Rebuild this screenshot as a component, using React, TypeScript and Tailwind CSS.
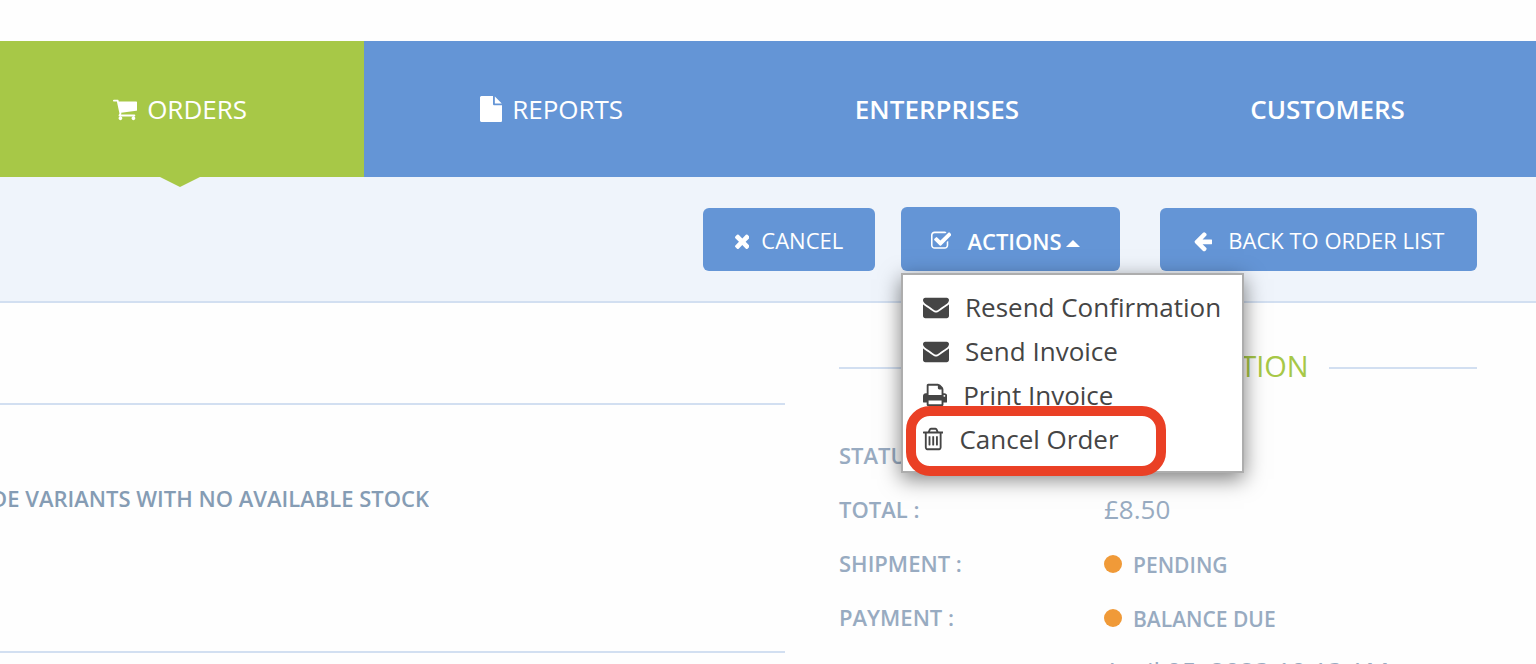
import type { ReactNode } from "react";

const paths = {
  cart: "M704 1536q0 52-38 90t-90 38-90-38-38-90 38-90 90-38 90 38 38 90zm896 0q0 52-38 90t-90 38-90-38-38-90 38-90 90-38 90 38 38 90zm128-1088v512q0 24-16.5 42.5t-40.5 21.5l-1044 122q13 60 13 70 0 16-24 64h920q26 0 45 19t19 45-19 45-45 19h-1024q-26 0-45-19t-19-45q0-11 8-31.5t16-36 21.5-40 15.5-29.5l-177-823h-204q-26 0-45-19t-19-45 19-45 45-19h256q16 0 28.5 6.5t19.5 15.5 13 24.5 8 26 5.5 29.5 4.5 26h1201q26 0 45 19t19 45z",
  file: "M1152 512v-472q22 14 36 28l408 408q14 14 28 36h-472zm-128 32q0 40 28 68t68 28h544v1056q0 40-28 68t-68 28h-1344q-40 0-68-28t-28-68v-1600q0-40 28-68t68-28h800v544z",
  times: "M1490 1322q0 40-28 68l-136 136q-28 28-68 28t-68-28l-294-294-294 294q-28 28-68 28t-68-28l-136-136q-28-28-28-68t28-68l294-294-294-294q-28-28-28-68t28-68l136-136q28-28 68-28t68 28l294 294 294-294q28-28 68-28t68 28l136 136q28 28 28 68t-28 68l-294 294 294 294q28 28 28 68z",
  check: "M1472 930v318q0 119-84.5 203.5t-203.5 84.5h-832q-119 0-203.5-84.5t-84.5-203.5v-832q0-119 84.5-203.5t203.5-84.5h832q63 0 117 25 15 7 18 23 3 17-9 29l-49 49q-10 10-23 10-3 0-9-2-23-6-45-6h-832q-66 0-113 47t-47 113v832q0 66 47 113t113 47h832q66 0 113-47t47-113v-254q0-13 9-22l64-64q10-10 23-10 6 0 12 3 20 8 20 29zm231-489l-814 814q-24 24-57 24t-57-24l-430-430q-24-24-24-57t24-57l110-110q24-24 57-24t57 24l263 263 647-647q24-24 57-24t57 24l110 110q24 24 24 57t-24 57z",
  arrow: "M1664 896v128q0 53-32.5 90.5t-84.5 37.5h-704l293 294q38 36 38 90t-38 90l-75 76q-37 37-90 37-52 0-91-37l-651-652q-37-37-37-90 0-52 37-91l651-650q38-38 91-38 52 0 90 38l75 74q38 38 38 91t-38 91l-293 293h704q52 0 84.5 37.5t32.5 90.5z",
  envelope: "M1792 710v794q0 66-47 113t-113 47h-1472q-66 0-113-47t-47-113v-794q44 49 101 87 362 246 497 345 57 42 92.5 65.5t94.5 48 110 24.5h2q51 0 110-24.5t94.5-48 92.5-65.5q170-123 498-345 57-39 100-87zm0-294q0 79-49 151t-122 123q-376 261-468 325-10 7-42.5 31t-54 38.5-52 32.5-57.5 27-50 9h-2q-23 0-50-9t-57.5-27-52-32.5-54-38.5-42.5-31q-91-64-262-182.5t-205-142.5q-62-42-117-115.5t-55-136.5q0-78 41.5-130t118.5-52h1472q65 0 112.5 47t47.5 113z",
  print: "M448 1536h896v-256h-896v256zm0-640h896v-384h-160q-40 0-68-28t-28-68v-160h-640v640zm1152 64q0-26-19-45t-45-19-45 19-19 45 19 45 45 19 45-19 19-45zm128 0v416q0 13-9.5 22.5t-22.5 9.5h-224v160q0 40-28 68t-68 28h-960q-40 0-68-28t-28-68v-160h-224q-13 0-22.5-9.5t-9.5-22.5v-416q0-79 56.5-135.5t135.5-56.5h64v-544q0-40 28-68t68-28h672q40 0 88 20t76 48l152 152q28 28 48 76t20 88v256h64q79 0 135.5 56.5t56.5 135.5z",
  trash: "M704 736v576q0 14-9 23t-23 9h-64q-14 0-23-9t-9-23v-576q0-14 9-23t23-9h64q14 0 23 9t9 23zm256 0v576q0 14-9 23t-23 9h-64q-14 0-23-9t-9-23v-576q0-14 9-23t23-9h64q14 0 23 9t9 23zm256 0v576q0 14-9 23t-23 9h-64q-14 0-23-9t-9-23v-576q0-14 9-23t23-9h64q14 0 23 9t9 23zm128 724v-948h-896v948q0 22 7 40.5t14.5 27 10.5 8.5h832q3 0 10.5-8.5t14.5-27 7-40.5zm-672-1076h448l-48-117q-7-9-17-11h-317q-10 2-17 11zm928 32v64q0 14-9 23t-23 9h-96v948q0 83-47 143.5t-113 60.5h-832q-66 0-113-58.5t-47-141.5v-952h-96q-14 0-23-9t-9-23v-64q0-14 9-23t23-9h309l70-167q15-37 54-63t79-26h320q40 0 79 26t54 63l70 167h309q14 0 23 9t9 23z",
};

type IconName = keyof typeof paths;

// Horizontal extent of each glyph in its 1792-unit em: [left, width].
const extents: Record<IconName, [number, number]> = {
  cart: [64, 1664],
  file: [128, 1536],
  times: [302, 1188],
  check: [64, 1664],
  arrow: [64, 1600],
  envelope: [0, 1792],
  print: [64, 1664],
  trash: [192, 1408],
};

function Icon({ name, className }: { name: IconName; className: string }) {
  const [left, width] = extents[name];
  return (
    <svg viewBox={`${left} 0 ${width} 1792`} fill="currentColor" aria-hidden="true" className={`shrink-0 ${className}`}>
      <path d={paths[name]} />
    </svg>
  );
}

function NavLink({ icon, children, active = false }: { icon?: IconName; children: ReactNode; active?: boolean }) {
  return (
    <a
      href="#"
      className={
        active
          ? "relative flex items-center justify-center gap-2.5 bg-[#a7c847] pr-1 font-medium"
          : icon
            ? "flex items-center justify-center gap-2.5 font-medium"
            : "flex items-center justify-center font-semibold"
      }
    >
      {icon && <Icon name={icon} className="h-[26px]" />}
      {children}
      {active && (
        <svg viewBox="0 0 40 10" className="absolute top-full left-1/2 -ml-[22px] h-2.5 w-10" aria-hidden="true">
          <path d="M0 0h40L20 10z" fill="#a7c847" />
        </svg>
      )}
    </a>
  );
}

const actions: { icon: IconName; label: string }[] = [
  { icon: "envelope", label: "Resend Confirmation" },
  { icon: "envelope", label: "Send Invoice" },
  { icon: "print", label: "Print Invoice" },
  { icon: "trash", label: "Cancel Order" },
];

function ActionsMenu() {
  return (
    <div className="relative">
      <button
        type="button"
        aria-expanded="true"
        className="flex h-16 w-[219px] items-center rounded-md bg-[#6495d6] pt-1 pl-[30px] font-semibold"
      >
        <Icon name="check" className="mr-4 h-[22px]" />
        ACTIONS
        <svg viewBox="0 0 14 7" className="mt-1 ml-1 h-[7px] w-3.5" aria-hidden="true">
          <path d="M0 7L7 0l7 7z" fill="currentColor" />
        </svg>
      </button>
      <ul className="absolute top-full left-0 z-10 mt-0.5 w-[343px] border-2 border-[#adadad] bg-white py-2.5 pl-5 text-[26px] text-[#454545] shadow-[0_6px_20px_rgba(0,0,0,0.5)]">
        {actions.map((action) => (
          <li key={action.label}>
            <button type="button" className="flex h-11 items-center gap-4 whitespace-nowrap">
              <Icon name={action.icon} className="h-[26px]" />
              {action.label}
            </button>
          </li>
        ))}
        <li aria-hidden="true" className="absolute top-[131px] left-[3px] h-[70px] w-[260px] rounded-3xl border-10 border-[#ea4025]" />
      </ul>
    </div>
  );
}

function Row({ label, children }: { label: string; children: ReactNode }) {
  return (
    <div className="flex h-[54px] items-center whitespace-nowrap">
      <dt className="w-[265px] text-[22px] font-semibold">{label}</dt>
      <dd className="text-[26px]">{children}</dd>
    </div>
  );
}

function Pending({ children }: { children: ReactNode }) {
  return (
    <span className="flex items-center gap-[11px] pt-0.5 text-[21px] font-semibold">
      <span className="size-[18px] rounded-full bg-[#f09a38]" />
      <span className="pt-1">{children}</span>
    </span>
  );
}

export default function App() {
  return (
    <div className="flex h-screen flex-col overflow-hidden bg-[#fefefe] pt-[41px] font-['Open_Sans','Noto_Sans',sans-serif]">
      <nav className="grid h-[136px] shrink-0 grid-cols-[364fr_375fr_396fr_385fr_16fr] bg-[#6495d6] text-[26px] text-white">
        <NavLink icon="cart" active>ORDERS</NavLink>
        <NavLink icon="file">REPORTS</NavLink>
        <NavLink>ENTERPRISES</NavLink>
        <NavLink>CUSTOMERS</NavLink>
      </nav>
      <header className="flex shrink-0 items-end justify-end border-b-2 border-[#d2dff1] bg-[#eff4fb] pt-[30px] pr-[59px] pb-[30px] text-[22px] whitespace-nowrap text-white">
        <button type="button" className="mr-[26px] flex h-[63px] min-w-[172px] items-center justify-center gap-3 rounded-md bg-[#6495d6] px-[30px] pt-0.5 font-medium">
          <Icon name="times" className="h-[22px]" />
          CANCEL
        </button>
        <ActionsMenu />
        <a href="#" className="ml-10 flex h-[63px] min-w-[317px] items-center justify-center gap-4 rounded-md bg-[#6495d6] px-[30px] pt-0.5 font-medium">
          <Icon name="arrow" className="h-[22px]" />
          BACK TO ORDER LIST
        </a>
      </header>
      <main className="flex pr-[59px]">
        <section className="mt-[100px] h-[250px] flex-1 border-y-2 border-[#d2dff1] pt-[77px]">
          <div className="flex w-[429px] justify-end overflow-hidden text-[22px] leading-8 font-semibold whitespace-nowrap text-[#859cb4]">
            INCLUDE VARIANTS WITH NO AVAILABLE STOCK
          </div>
        </section>
        <aside className="ml-[54px] w-[638px] pt-[43px] text-[#98abc1]">
          <h2 className="flex h-11 items-center gap-5 text-[29px] font-medium whitespace-nowrap text-[#a7c847]">
            <span className="h-0.5 flex-1 bg-[#d2dff1]" />
            <span className="pb-1">ORDER INFORMATION</span>
            <span className="h-0.5 flex-1 bg-[#d2dff1]" />
          </h2>
          <dl className="mt-[38px]">
            <Row label="STATUS :">COMPLETE</Row>
            <Row label="TOTAL :">£8.50</Row>
            <Row label="SHIPMENT :"><Pending>PENDING</Pending></Row>
            <Row label="PAYMENT :"><Pending>BALANCE DUE</Pending></Row>
            <Row label="DATE COMPLETED :">April 05, 2023 10:13 AM</Row>
          </dl>
        </aside>
      </main>
    </div>
  );
}
